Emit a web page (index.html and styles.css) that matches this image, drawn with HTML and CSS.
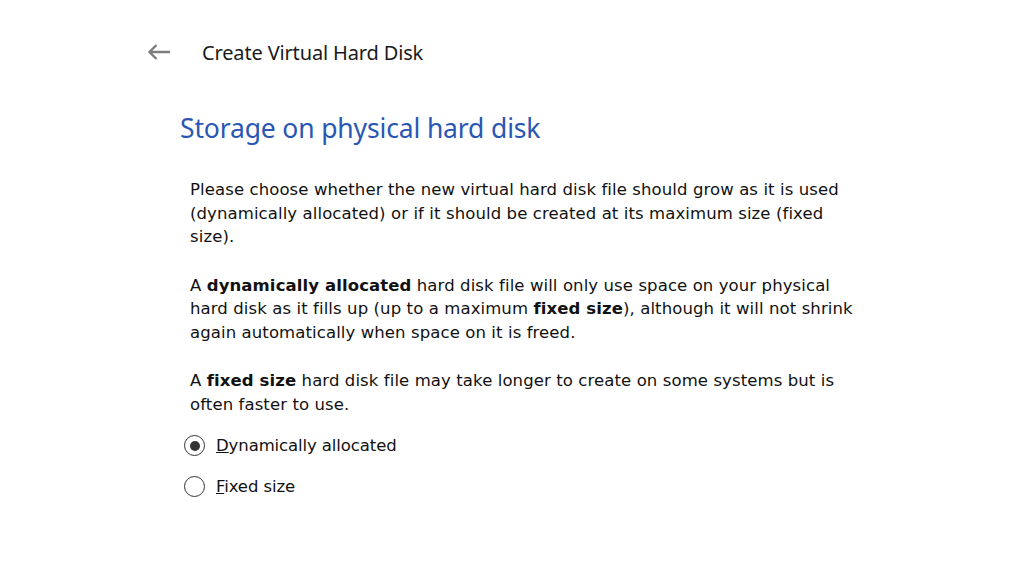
FILE: index.html
```html
<!DOCTYPE html>
<html lang="en">
<head>
<meta charset="utf-8">
<title>Create Virtual Hard Disk</title>
<link rel="stylesheet" href="styles.css">
</head>
<body>
<div class="wizard">
  <header class="topbar">
    <span class="back" aria-label="Back">
      <svg width="24" height="16" viewBox="0 0 24 16"><path d="M2.5 8 H23 M9.5 1 L2.5 8 L9.5 15" fill="none" stroke="#7d7d7d" stroke-width="2.4"/></svg>
    </span>
    <span class="title">Create Virtual Hard Disk</span>
  </header>
  <main class="page">
    <h1 class="heading">Storage on physical hard disk</h1>
    <div class="body">
      <p class="para">Please choose whether the new virtual hard disk file should grow as it is used (dynamically allocated) or if it should be created at its maximum size (fixed size).</p>
      <p class="para">A <b>dynamically allocated</b> hard disk file will only use space on your physical hard disk as it fills up (up to a maximum <b>fixed size</b>), although it will not shrink again automatically when space on it is freed.</p>
      <p class="para">A <b>fixed size</b> hard disk file may take longer to create on some systems but is often faster to use.</p>
    </div>
    <div class="options">
      <label class="radio"><span class="circle checked"></span><span class="lbl"><u>D</u>ynamically allocated</span></label>
      <label class="radio"><span class="circle"></span><span class="lbl"><u>F</u>ixed size</span></label>
    </div>
  </main>
</div>
</body>
</html>
```
FILE: styles.css
```css
html, body {
  margin: 0;
  padding: 0;
  background: #ffffff;
}
body {
  width: 1024px;
  height: 562px;
  overflow: hidden;
}
.wizard {
  padding: 40px 0 0 147px;
}
.topbar {
  display: flex;
  align-items: center;
  height: 24px;
}
.back {
  display: flex;
  width: 55px;
}
.title {
  font-family: "Noto Sans", sans-serif;
  font-size: 20px;
  color: #1a1a1a;
  letter-spacing: -0.15px;
}
.page {
  padding: 47px 0 0 33px;
}
.heading {
  margin: 0;
  font-family: "Noto Sans", sans-serif;
  font-weight: normal;
  font-size: 26.5px;
  line-height: 34px;
  color: #2a57b3;
  letter-spacing: -0.15px;
}
.body {
  padding: 33px 0 0 10px;
  width: 680px;
}
.para {
  margin: 0 0 25px 0;
  font-family: "DejaVu Sans", sans-serif;
  font-size: 16.5px;
  line-height: 23.5px;
  color: #111111;
  letter-spacing: 0.1px;
}
.para:last-child {
  margin-bottom: 19px;
}
.options {
  display: flex;
  flex-direction: column;
  gap: 20px;
  padding: 0 0 0 4px;
}
.radio {
  display: flex;
  align-items: center;
  gap: 11px;
  font-family: "DejaVu Sans", sans-serif;
  font-size: 16.5px;
  color: #111111;
  letter-spacing: -0.1px;
  height: 21px;
}
.circle {
  box-sizing: border-box;
  width: 21px;
  height: 21px;
  border: 1.5px solid #333333;
  border-radius: 50%;
  display: flex;
  align-items: center;
  justify-content: center;
}
.circle.checked::after {
  content: "";
  width: 10px;
  height: 10px;
  border-radius: 50%;
  background: #333333;
}
```
